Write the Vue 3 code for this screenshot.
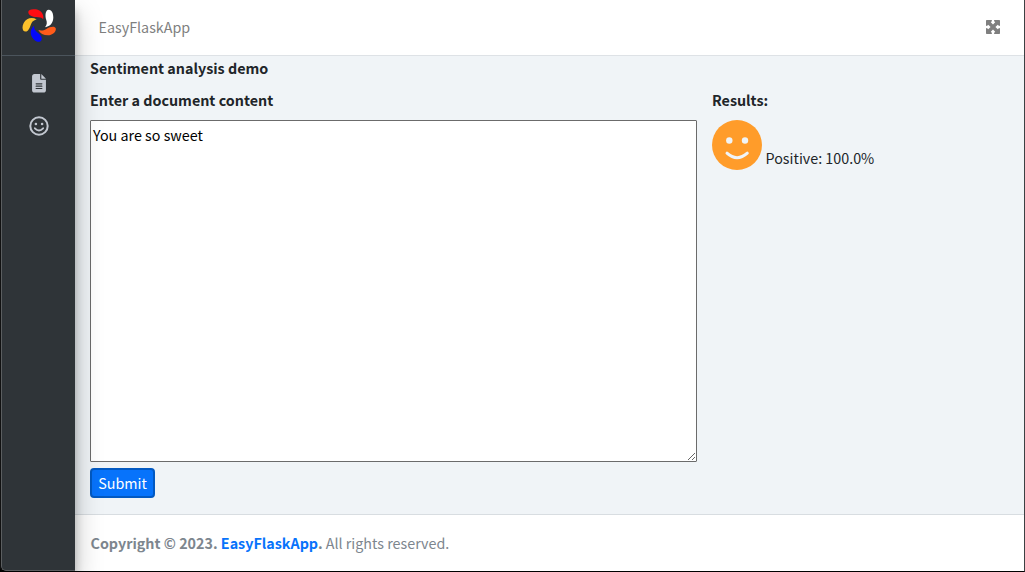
<script setup>
const brand = 'EasyFlaskApp'
</script>

<template>
  <div class="window">
    <aside class="sidebar">
      <div class="logo">
        <svg width="36" height="36" viewBox="0 0 36 36">
          <path fill="#fe0d12" d="M6.300 4.200C6.300 1.500 10.500 .9 14 1.300C19 2 22.300 6.500 21.200 11.200C19.500 9.400 17.500 9.300 14.500 9.100C10.500 8.700 6.300 7.300 6.300 4.200Z" />
          <path fill="#fff" d="M26.700 1.700C29.800 1.500 31.300 5.500 31.300 9.500C31.300 14.500 28.500 18.500 23 19.200C25 16.800 25.200 14.800 24.200 11.800C22.900 7.500 23.300 2 26.700 1.700Z" />
          <path fill="#ff5b1a" d="M33.800 20.500C34.500 24 30 27.300 26 27.300C21.500 27.300 18 25.500 16.300 22C19.200 22.900 21.500 22.600 24.300 20.900C28 18.600 33 17.500 33.800 20.500Z" />
          <path fill="#0408f8" d="M19.700 31.500C19 34.800 14.500 34.400 11.800 31.500C7.700 27 7.800 21.500 12 17.700C12 20.800 13 22.500 15.500 24.500C18 26.400 20.300 28.700 19.700 31.500Z" />
          <path fill="#fcc12c" d="M3.500 23.600C.2 23.400 -.3 18.500 1.700 15C4.500 10 10 8.600 14.700 11.500C11.500 12.300 10 13.400 8.800 16.800C7.700 20 6.300 23.700 3.500 23.600Z" />
        </svg>
      </div>
      <nav>
        <svg class="file" viewBox="0 0 384 512"><path d="M64 0C28.700 0 0 28.700 0 64V448c0 35.300 28.700 64 64 64H320c35.300 0 64-28.700 64-64V160H256c-17.700 0-32-14.300-32-32V0H64zM256 0V128H384L256 0zM112 256H272c8.800 0 16 7.200 16 16s-7.200 16-16 16H112c-8.800 0-16-7.200-16-16s7.200-16 16-16zm0 64H272c8.800 0 16 7.200 16 16s-7.200 16-16 16H112c-8.800 0-16-7.200-16-16s7.200-16 16-16zm0 64H272c8.800 0 16 7.200 16 16s-7.200 16-16 16H112c-8.800 0-16-7.200-16-16s7.200-16 16-16z" /></svg>
        <svg class="smile" viewBox="0 0 20 20">
          <circle cx="10" cy="10" r="8.700" fill="none" stroke="#c2c7d0" stroke-width="2" />
          <circle cx="6.900" cy="8" r="1.300" /><circle cx="13.100" cy="8" r="1.300" />
          <path d="M5.900 12.300Q10 16.600 14.100 12.300" fill="none" stroke="#c2c7d0" stroke-width="1.900" stroke-linecap="round" />
        </svg>
      </nav>
    </aside>
    <div class="page">
      <header>
        <span>{{ brand }}</span>
        <svg width="14" height="14" viewBox="0 0 14 14" fill="#7f7f7f">
          <path d="M.7 0H5.600Q6.300 .5 5.800 1.200L4.800 2.200L7 4.600L9.200 2.200L8.200 1.200Q7.700 .5 8.400 0H13.300Q14 0 14 .7V5.600Q13.500 6.300 12.800 5.800L11.800 4.800L9.400 7L11.800 9.200L12.800 8.200Q13.500 7.700 14 8.400V13.300Q14 14 13.300 14H8.400Q7.700 13.500 8.200 12.800L9.200 11.800L7 9.400L4.800 11.800L5.800 12.800Q6.300 13.500 5.600 14H.7Q0 14 0 13.300V8.400Q.5 7.700 1.200 8.200L2.200 9.200L4.600 7L2.200 4.800L1.200 5.800Q.5 6.300 0 5.600V.7Q0 0 .7 0Z" />
        </svg>
      </header>
      <main>
        <h1>Sentiment analysis demo</h1>
        <div class="columns">
          <form @submit.prevent>
            <label for="doc">Enter a document content</label>
            <textarea id="doc" spellcheck="false">You are so sweet</textarea>
            <button>Submit</button>
          </form>
          <section>
            <b>Results:</b>
            <div class="result">
              <svg width="50" height="50" viewBox="0 0 50 50">
                <circle cx="25" cy="25" r="25" fill="#ff9c2a" />
                <circle cx="17.300" cy="20.500" r="3.200" fill="#f0f4f7" /><circle cx="33" cy="20.500" r="3.200" fill="#f0f4f7" />
                <path d="M15 33.200Q25 42.300 35.300 33.200" fill="none" stroke="#f0f4f7" stroke-width="3" stroke-linecap="round" />
              </svg>
              <span>Positive: 100.0%</span>
            </div>
          </section>
        </div>
      </main>
      <footer><strong>Copyright © 2023. <a>{{ brand }}</a>.</strong> All rights reserved.</footer>
    </div>
  </div>
</template>

<style>
body { margin: 0; background: #000; overflow: hidden; }
</style>

<style scoped>
.window {
  box-sizing: border-box;
  width: 1025px;
  height: 572px;
  display: flex;
  border-left: 1px solid #111;
  border-right: 1px solid #3c4043;
  border-bottom: 1px solid #000;
  border-bottom-left-radius: 5px;
  overflow: hidden;
  font: 14.320px/24px "Noto Sans CJK SC", "Noto Sans", sans-serif;
  color: #212529;
}
.sidebar {
  box-sizing: border-box;
  width: 74px;
  flex: none;
  position: relative;
  z-index: 1;
  background: #2f3438;
  border-left: 1px solid #5b5e60;
  border-bottom: 1px solid #5b5e60;
  border-bottom-left-radius: 5px;
  box-shadow: 0 14px 28px rgba(0, 0, 0, .25), 0 10px 10px rgba(0, 0, 0, .22);
}
.logo { box-sizing: border-box; height: 56px; padding: 8px 0 0 20px; border-bottom: 1px solid #4b545c; }
.logo svg { display: block; }
nav { display: flex; flex-direction: column; align-items: center; fill: #c2c7d0; }
.file { width: 14px; height: 18.500px; margin-top: 18px; }
.smile { width: 20px; height: 20px; margin-top: 23.500px; }
.page { flex: 1; display: flex; flex-direction: column; background: #f0f4f7; }
header {
  box-sizing: border-box;
  height: 56px;
  background: #fff;
  border-bottom: 1px solid #dee2e6;
  display: flex;
  align-items: flex-start;
  justify-content: space-between;
  padding: 15px 24px 0 23.500px;
  color: #7f7f7f;
}
header svg { margin-top: 5px; }
main { flex: 1; }
main { padding: 0 15px; }
h1 { margin: 0; font-size: inherit; line-height: 24px; font-weight: 700; }
.columns { display: flex; gap: 15px; padding-top: 8px; }
form { width: 607px; }
label { display: block; font-weight: 700; margin-bottom: 8px; }
textarea {
  display: block;
  box-sizing: border-box;
  width: 607px;
  height: 342px;
  margin: 0;
  padding: 2px;
  border: 1px solid #6b6b6b;
  border-radius: 1px;
  background: #fff;
  color: #000;
  font: inherit;
}
button {
  display: block;
  box-sizing: border-box;
  width: 65px;
  height: 30px;
  margin-top: 6px;
  padding: 0;
  border: 2px solid #0259c2;
  border-radius: 4px;
  background: #0773fb;
  color: #fff;
  font: inherit;
}
section b { display: block; }
.result { display: flex; gap: 3.500px; margin-top: 8px; }
.result span { margin-top: 26px; }
footer {
  box-sizing: border-box;
  height: 57px;
  padding: 16px 15.500px;
  background: #fff;
  border-top: 1px solid #d8dde1;
  color: #7d868e;
}
footer a { color: #0773fb; }
</style>
